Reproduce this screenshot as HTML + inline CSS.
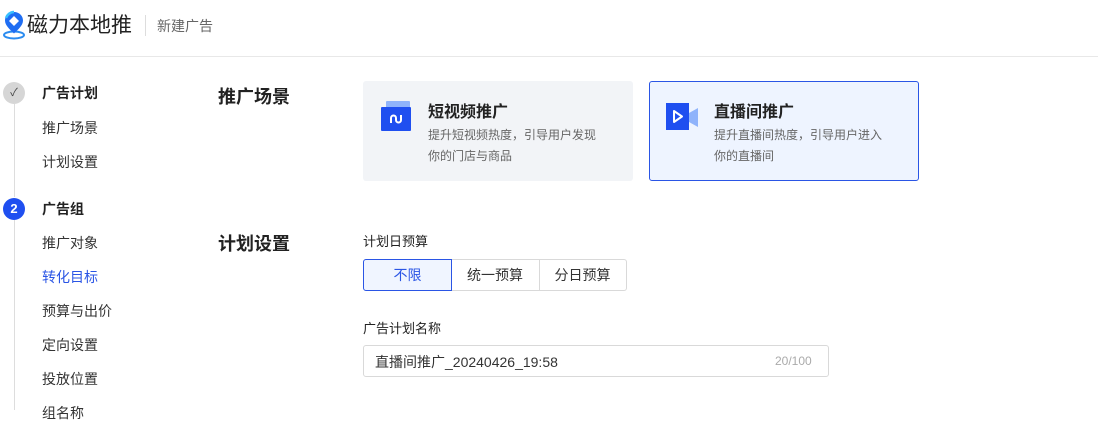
<!DOCTYPE html>
<html><head><meta charset="utf-8"><style>
*{margin:0;padding:0;box-sizing:border-box}
body{width:1098px;height:410px;overflow:hidden;background:#fff;font-family:"Liberation Sans","Noto Sans CJK SC",sans-serif;color:#222;position:relative}
.a{position:absolute;white-space:nowrap}
.hdr{position:absolute;left:0;top:0;width:1098px;height:57px;border-bottom:1px solid #e8e8e8}
.nav{font-size:14px;color:#333;left:42px;line-height:20px}
.card{position:absolute;top:81px;height:100px;border-radius:3px}
.t{font-size:16px;font-weight:bold;color:#222}
.d{font-size:12px;color:#666;line-height:21px}
.btn{position:absolute;top:259px;height:32px;border:1px solid #d9d9d9;font-size:14px;text-align:center;line-height:30px;color:#333}
</style></head><body>
<div class="hdr"></div>
<svg class="a" style="left:2px;top:10px" width="24" height="30" viewBox="0 0 24 30">
<ellipse cx="12" cy="25" rx="10" ry="3.5" fill="none" stroke="#2b8cf0" stroke-width="2"/>
<path d="M12 2C6.5 2 3 6 3 10.5c0 5 5 9 9 13c4-4 9-8 9-13C21 6 17.5 2 12 2z" fill="#1f6df2"/>
<path d="M12 6l5 5l-5 5l-5-5z" fill="#fff"/>
<path d="M4 8c1-3 4-6 8-6" stroke="#39c0ff" stroke-width="2.5" fill="none"/>
</svg>
<div class="a" style="left:27px;top:12px;font-size:21px;color:#222;line-height:28px">磁力本地推</div>
<div class="a" style="left:145px;top:15px;width:1px;height:21px;background:#ddd"></div>
<div class="a" style="left:157px;top:16px;font-size:14px;color:#666">新建广告</div>

<div class="a" style="left:3px;top:82px;width:22px;height:22px;border-radius:50%;background:#d6d6d6;font-size:11px;text-align:center;line-height:22px;color:#444">✓</div>
<div class="a" style="left:14px;top:104px;width:1px;height:93px;background:#ddd"></div>
<div class="a" style="left:3px;top:198px;width:22px;height:22px;border-radius:50%;background:#1f4ff0;color:#fff;font-size:13px;font-weight:bold;text-align:center;line-height:22px">2</div>
<div class="a" style="left:14px;top:220px;width:1px;height:190px;background:#ddd"></div>
<div class="a nav" style="top:83px;font-weight:bold;color:#222">广告计划</div>
<div class="a nav" style="top:118px">推广场景</div>
<div class="a nav" style="top:152px">计划设置</div>
<div class="a nav" style="top:199px;font-weight:bold;color:#222">广告组</div>
<div class="a nav" style="top:233px">推广对象</div>
<div class="a nav" style="top:267px;color:#2a55e5">转化目标</div>
<div class="a nav" style="top:301px">预算与出价</div>
<div class="a nav" style="top:335px">定向设置</div>
<div class="a nav" style="top:369px">投放位置</div>
<div class="a nav" style="top:403px">组名称</div>

<div class="a" style="left:218px;top:83px;font-size:18px;font-weight:bold;color:#222">推广场景</div>
<div class="card" style="left:363px;width:270px;background:#f2f4f7"></div>
<div class="card" style="left:649px;width:270px;background:#eef4ff;border:1px solid #2a55e5"></div>
<svg class="a" style="left:381px;top:101px" width="32" height="32" viewBox="0 0 32 32">
<rect x="5" y="0" width="24" height="10" rx="1" fill="#8fb3fb"/>
<rect x="0" y="6" width="30" height="24" rx="1" fill="#1f4ff0"/>
<path d="M10 22v-5a2.5 2.5 0 0 1 5 0v2a2.5 2.5 0 0 0 5 0v-5" stroke="#fff" stroke-width="2" fill="none"/>
</svg>
<svg class="a" style="left:666px;top:101px" width="34" height="32" viewBox="0 0 34 32">
<rect x="0" y="2" width="23" height="27" fill="#1f4ff0"/>
<path d="M23 12l9-5v19l-9-5z" fill="#8fb3fb"/>
<path d="M8 10v11l8-5.5z" stroke="#fff" stroke-width="2" fill="none" stroke-linejoin="round"/>
</svg>
<div class="a t" style="left:428px;top:98px">短视频推广</div>
<div class="a d" style="left:428px;top:125px">提升短视频热度，引导用户发现<br>你的门店与商品</div>
<div class="a t" style="left:714px;top:98px">直播间推广</div>
<div class="a d" style="left:714px;top:125px">提升直播间热度，引导用户进入<br>你的直播间</div>

<div class="a" style="left:218px;top:230px;font-size:18px;font-weight:bold;color:#222">计划设置</div>
<div class="a" style="left:363px;top:231px;font-size:13px;color:#222">计划日预算</div>
<div class="btn" style="left:363px;width:89px;border-color:#2a55e5;background:#f0f5ff;color:#2a55e5;border-radius:3px 0 0 3px;z-index:2">不限</div>
<div class="btn" style="left:451px;width:89px;border-left:none">统一预算</div>
<div class="btn" style="left:539px;width:88px;border-left:none;border-radius:0 3px 3px 0">分日预算</div>
<div class="a" style="left:363px;top:318px;font-size:13px;color:#222">广告计划名称</div>
<div class="a" style="left:363px;top:345px;width:466px;height:32px;border:1px solid #d9d9d9;border-radius:3px"></div>
<div class="a" style="left:375px;top:352px;font-size:14px;color:#333">直播间推广_20240426_19:58</div>
<div class="a" style="left:775px;top:354px;font-size:12px;color:#aaa">20/100</div>
</body></html>
